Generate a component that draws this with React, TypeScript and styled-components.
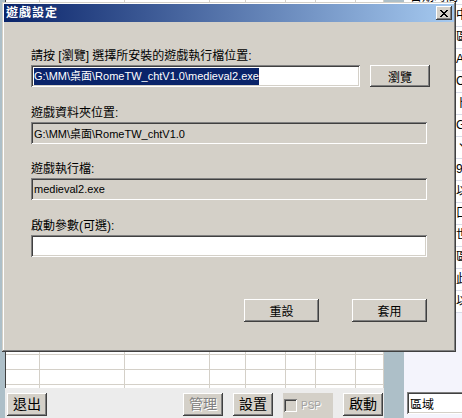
import React from 'react';
import styled, { createGlobalStyle } from 'styled-components';

const FONT = `"Liberation Sans", "Noto Sans CJK TC", sans-serif`;

const GlobalStyle = createGlobalStyle`
  html, body { margin: 0; padding: 0; }
  body {
    width: 462px;
    height: 418px;
    overflow: hidden;
    background: #ffffff;
    font-family: ${FONT};
    -webkit-font-smoothing: none;
  }
`;

const raised = `
  background: #d4d0c8;
  border: none;
  box-shadow: inset -1px -1px #404040, inset 1px 1px #ffffff, inset -2px -2px #808080, inset 2px 2px #d4d0c8;
`;

const sunken = `
  box-shadow: inset 1px 1px #808080, inset -1px -1px #ffffff, inset 2px 2px #404040, inset -2px -2px #d4d0c8;
`;

/* ---------- background application ---------- */
const Screen = styled.div`
  position: relative;
  width: 462px;
  height: 418px;
  overflow: hidden;
  display: flex;
`;

const Strip = styled.div<{ $w: number }>`
  width: ${(p) => p.$w}px;
  flex: none;
  background: #adbfc8;
`;

const MainCol = styled.div`
  width: 379px;
  flex: none;
  display: flex;
  flex-direction: column;
`;

const Table = styled.div`
  flex: 1;
  background: #ffffff;
  border-left: 1px solid #404040;
  overflow: hidden;
`;

const TRow = styled.div<{ $h: number }>`
  display: grid;
  grid-template-columns: 34px 85px 85px 36px 40px 30px 40px 28px;
  height: ${(p) => p.$h}px;
`;

const TCell = styled.div`
  box-sizing: border-box;
  border-right: 1px solid #d4d0c8;
  border-bottom: 1px solid #d4d0c8;
`;

const Toolbar = styled.div`
  height: 30px;
  flex: none;
  box-sizing: border-box;
  background: #ececec;
  display: flex;
  justify-content: space-between;
  align-items: flex-start;
  padding: 5px 1px 0 2px;
`;

const ToolGroup = styled.div`
  display: flex;
  gap: 10px;
  align-items: flex-start;
`;

const ToolButton = styled.button<{ $off?: boolean }>`
  ${raised}
  width: 40px;
  height: 23px;
  padding: 0;
  font-family: ${FONT};
  font-size: 14px;
  line-height: 23px;
  color: ${(p) => (p.$off ? '#808080' : '#000000')};
  text-shadow: ${(p) => (p.$off ? '1px 1px #ffffff' : 'none')};
`;

const CheckGroup = styled.div`
  width: 50px;
  height: 25px;
  background: #d4d0c8;
  display: flex;
  align-items: center;
  gap: 4px;
  padding-left: 1px;
  box-sizing: border-box;
`;

const CheckBox = styled.span`
  width: 13px;
  height: 13px;
  box-sizing: border-box;
  background: #d4d0c8;
  ${sunken}
`;

const CheckLabel = styled.span`
  font-family: ${FONT};
  font-size: 10px;
  color: #a0a0a0;
  text-shadow: 1px 1px #ffffff;
`;

const RightCol = styled.div`
  flex: 1;
  min-width: 0;
  background: #f4f4fc;
  display: flex;
  flex-direction: column;
  overflow: hidden;
`;

const List = styled.div`
  background: #ffffff;
`;

const ListHeader = styled.div`
  height: 4px;
  overflow: hidden;
  display: flex;
  align-items: flex-end;
  padding-left: 6px;
  font-size: 12px;
  line-height: 14px;
  white-space: nowrap;
  border-bottom: 1px solid #d8dce8;
`;

const ListRow = styled.div`
  height: 22px;
  box-sizing: border-box;
  border-bottom: 1px solid #d8dce8;
  padding-left: 52px;
  font-size: 12px;
  line-height: 21px;
  white-space: nowrap;
  overflow: hidden;
`;

const Filler = styled.div`
  flex: 1;
`;

const RegionBox = styled.div`
  margin: 0 0 4px 3px;
  width: 80px;
  height: 22px;
  box-sizing: border-box;
  background: #ffffff;
  ${sunken}
  padding-left: 3px;
  display: flex;
  align-items: center;
  font-size: 12px;
`;

/* ---------- dialog ---------- */
const Dialog = styled.div`
  position: absolute;
  left: 2px;
  top: 2px;
  width: 454px;
  height: 350px;
  box-sizing: border-box;
  padding: 2px;
  background: #d4d0c8;
  box-shadow: inset -1px -1px #404040, inset 1px 1px #d4d0c8, inset -2px -2px #808080, inset 2px 2px #ffffff;
  display: flex;
  flex-direction: column;
`;

const TitleBar = styled.div`
  height: 18px;
  flex: none;
  background: linear-gradient(to right, #0a246a, #a6caf0);
  display: flex;
  align-items: center;
  justify-content: space-between;
  padding: 0 2px 0 2px;
`;

const Title = styled.span`
  color: #ffffff;
  font-weight: bold;
  font-size: 12px;
  line-height: 14px;
  letter-spacing: 1px;
`;

const CloseButton = styled.button`
  ${raised}
  width: 16px;
  height: 14px;
  padding: 0;
  display: flex;
  align-items: center;
  justify-content: center;
`;

const Body = styled.div`
  padding: 27px 0 0 27px;
  display: flex;
  flex-direction: column;
`;

const Field = styled.div<{ $top: number }>`
  margin-top: ${(p) => p.$top}px;
  display: flex;
  flex-direction: column;
  gap: 2px;
`;

const Label = styled.div`
  height: 14px;
  font-size: 12px;
  line-height: 14px;
  color: #000000;
  white-space: nowrap;
`;

const InputRow = styled.div`
  display: flex;
  gap: 10px;
`;

const TextBox = styled.div<{ $w: number; $off?: boolean }>`
  width: ${(p) => p.$w}px;
  height: 22px;
  box-sizing: border-box;
  background: ${(p) => (p.$off ? '#d4d0c8' : '#ffffff')};
  ${sunken}
  padding: 0 2px 0 3px;
  display: flex;
  align-items: center;
  font-family: ${FONT};
  font-size: 11px;
  color: #000000;
  white-space: nowrap;
  overflow: hidden;
`;

const Selected = styled.span`
  background: #0a246a;
  color: #ffffff;
  line-height: 17px;
`;

const DlgButton = styled.button<{ $w: number; $h: number }>`
  ${raised}
  width: ${(p) => p.$w}px;
  height: ${(p) => p.$h}px;
  padding: 0;
  font-family: ${FONT};
  font-size: 12px;
  color: #000000;
`;

const ButtonRow = styled.div`
  margin-top: 42px;
  width: 396px;
  display: flex;
  justify-content: flex-end;
  gap: 33px;
`;

const tableRows = [10, ...Array(26).fill(15)];
const listItems = ['中', '區域', 'A', 'C', '卜', 'G', 'ヽ', '9', '以', '口', '世', '區', '此', '以'];

export default function App() {
  return (
    <>
      <GlobalStyle />
      <Screen>
        <Strip $w={5} />
        <MainCol>
          <Table>
            {tableRows.map((h, i) => (
              <TRow key={i} $h={h}>
                {Array.from({ length: 8 }).map((_, j) => (
                  <TCell key={j} />
                ))}
              </TRow>
            ))}
          </Table>
          <Toolbar>
            <ToolButton>退出</ToolButton>
            <ToolGroup>
              <ToolButton $off>管理</ToolButton>
              <ToolButton>設置</ToolButton>
              <CheckGroup>
                <CheckBox />
                <CheckLabel>PSP</CheckLabel>
              </CheckGroup>
              <ToolButton>啟動</ToolButton>
            </ToolGroup>
          </Toolbar>
        </MainCol>
        <Strip $w={20} />
        <RightCol>
          <List>
            <ListHeader>
              <span>日期時間</span>
            </ListHeader>
            {listItems.map((t, i) => (
              <ListRow key={i}>{t}</ListRow>
            ))}
          </List>
          <Filler />
          <RegionBox>區域</RegionBox>
        </RightCol>

        <Dialog>
          <TitleBar>
            <Title>遊戲設定</Title>
            <CloseButton aria-label="close">
              <svg width="8" height="7" viewBox="0 0 8 7" shapeRendering="crispEdges">
                <path d="M0 0h2v1H0zM1 1h2v1H1zM2 2h1v1H2zM3 2h2v3H3zM2 4h1v1H2zM1 5h2v1H1zM0 6h2v1H0zM6 0h2v1H6zM5 1h2v1H5zM5 2h1v1H5zM5 4h1v1H5zM5 5h2v1H5zM6 6h2v1H6z" fill="#000" />
              </svg>
            </CloseButton>
          </TitleBar>
          <Body>
            <Field $top={0}>
              <Label>請按 [瀏覽] 選擇所安裝的遊戲執行檔位置:</Label>
              <InputRow>
                <TextBox $w={329}>
                  <Selected>G:\MM\桌面\RomeTW_chtV1.0\medieval2.exe</Selected>
                </TextBox>
                <DlgButton $w={60} $h={22}>瀏覽</DlgButton>
              </InputRow>
            </Field>
            <Field $top={19}>
              <Label>遊戲資料夾位置:</Label>
              <TextBox $w={396} $off>G:\MM\桌面\RomeTW_chtV1.0</TextBox>
            </Field>
            <Field $top={18}>
              <Label>遊戲執行檔:</Label>
              <TextBox $w={396} $off>medieval2.exe</TextBox>
            </Field>
            <Field $top={19}>
              <Label>啟動參數(可選):</Label>
              <TextBox $w={396} />
            </Field>
            <ButtonRow>
              <DlgButton $w={75} $h={23}>重設</DlgButton>
              <DlgButton $w={75} $h={23}>套用</DlgButton>
            </ButtonRow>
          </Body>
        </Dialog>
      </Screen>
    </>
  );
}
